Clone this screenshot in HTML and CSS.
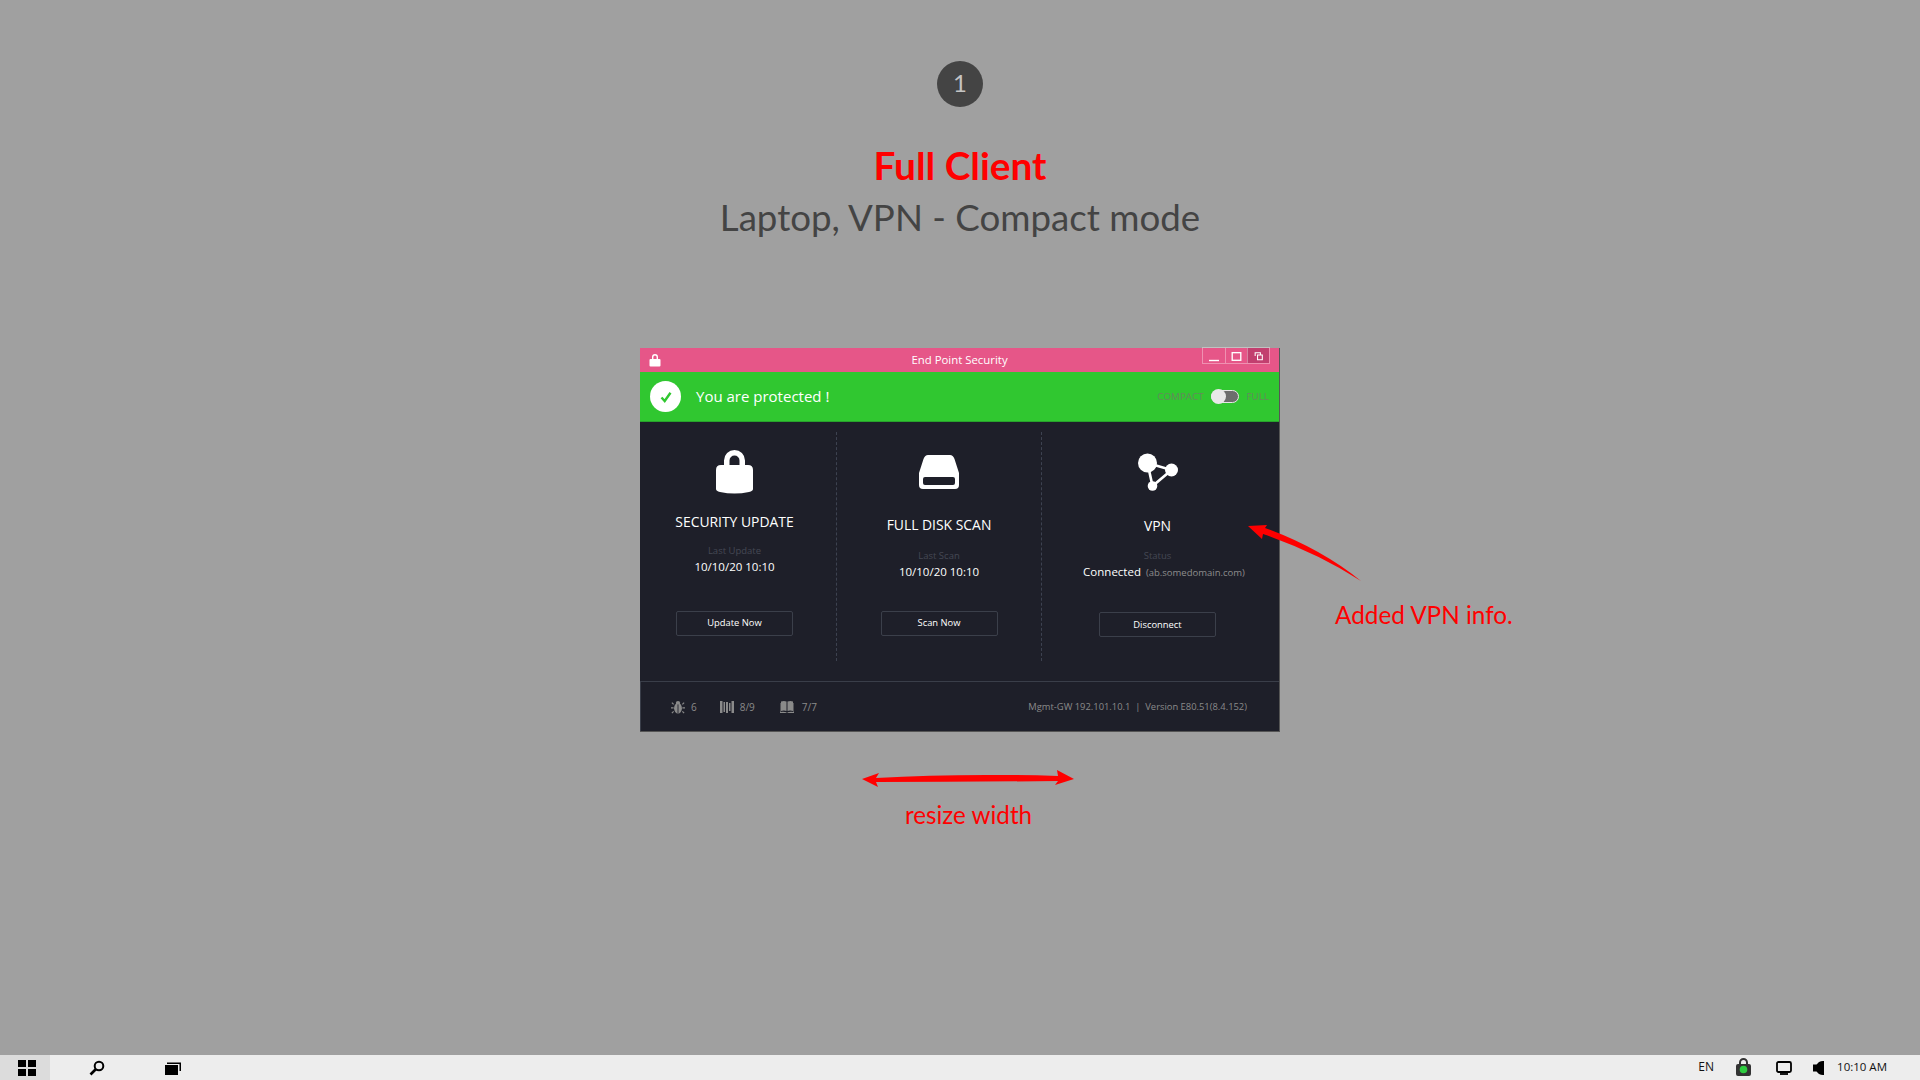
FILE: index.html
```html
<!DOCTYPE html>
<html lang="en">
<head>
    <meta charset="UTF-8">
    <title>End Point Security - Full Client</title>
    <link rel="stylesheet" href="styles.css">
</head>
<body>
    <main class="stage">
        <div class="step-badge">1</div>
        <h1 class="page-title">Full Client</h1>
        <h2 class="page-subtitle">Laptop, VPN - Compact mode</h2>

        <section class="app-window">
            <header class="title-bar">
                <svg class="title-lock" viewBox="0 0 12 14"><path fill="#fff" fill-rule="evenodd" d="M3 6V4a3 3 0 0 1 6 0v2h1.500q1 0 1 1v5.500q0 1-1 1h-9q-1 0-1-1V7q0-1 1-1zM4.400 6h3.200V4a1.600 1.600 0 0 0-3.200 0z"/></svg>
                <span class="title-text">End Point Security</span>
                <div class="window-controls">
                    <span class="win-btn"><svg viewBox="0 0 22 16"><path d="M6 12.500h10" stroke="#fff" stroke-width="1.400"/></svg></span>
                    <span class="win-btn"><svg viewBox="0 0 22 16"><rect x="6.500" y="4.500" width="9" height="8" fill="none" stroke="#fff" stroke-width="1.400"/></svg></span>
                    <span class="win-btn active"><svg viewBox="0 0 22 16"><path d="M7.500 8V4.500H13V7M10 7h5v5h-5z" fill="none" stroke="#fff" stroke-width="1.100"/></svg></span>
                </div>
            </header>

            <div class="status-bar">
                <span class="status-check"><svg viewBox="0 0 14 14"><path d="M2.500 7.500 5.700 11 11.500 2.800" fill="none" stroke="#30c730" stroke-width="2.400"/></svg></span>
                <span class="status-text">You are protected !</span>
                <div class="mode-switch">
                    <span>COMPACT</span>
                    <span class="toggle"><span class="toggle-knob"></span></span>
                    <span>FULL</span>
                </div>
            </div>

            <div class="panels">
                <div class="panel panel-update">
                    <svg class="panel-icon icon-lock" viewBox="0 0 37 44"><path fill="#fff" fill-rule="evenodd" d="M8 15V10.500a10.500 10.500 0 0 1 21 0V15h3q5 0 5 5v19q0 2-4 3-14.500 3-29 0-4-1-4-3V20q0-5 5-5zM13.500 15h10V10.500a5 5 0 0 0-10 0z"/></svg>
                    <div class="panel-title">SECURITY UPDATE</div>
                    <div class="panel-label">Last Update</div>
                    <div class="panel-value">10/10/20 10:10</div>
                    <button class="panel-btn">Update Now</button>
                </div>
                <div class="panel panel-scan">
                    <svg class="panel-icon icon-disk" viewBox="0 0 40 34"><path fill="#fff" fill-rule="evenodd" d="M9 0h22q3 0 4.500 4L40 18v12q0 4-4 4H4q-4 0-4-4V18L4.500 4Q6 0 9 0zM6 22q-2 0-2 2v4q0 2 2 2h28q2 0 2-2v-4q0-2-2-2z"/></svg>
                    <div class="panel-title">FULL DISK SCAN</div>
                    <div class="panel-label">Last Scan</div>
                    <div class="panel-value">10/10/20 10:10</div>
                    <button class="panel-btn">Scan Now</button>
                </div>
                <div class="panel panel-vpn">
                    <svg class="panel-icon icon-vpn" viewBox="0 0 42 40"><g fill="#fff"><circle cx="10.500" cy="10" r="9.500"/><circle cx="34.500" cy="17" r="6.500"/><circle cx="15.500" cy="33" r="4.800"/></g><path d="M10.500 10 34.500 17 15.500 33z" fill="none" stroke="#fff" stroke-width="2.600"/></svg>
                    <div class="panel-title">VPN</div>
                    <div class="panel-label">Status</div>
                    <div class="panel-value">Connected <small>(ab.somedomain.com)</small></div>
                    <button class="panel-btn">Disconnect</button>
                </div>
            </div>

            <footer class="app-footer">
                <div class="counter">
                    <svg viewBox="0 0 16 16"><g fill="#8a8a8a"><ellipse cx="8" cy="9.500" rx="4.500" ry="6"/><circle cx="8" cy="3.500" r="2.500"/></g><path d="M3 5 1 3M13 5l2-2M3 9H0M13 9h3M3 13l-2 2M13 13l2 2" stroke="#8a8a8a" stroke-width="1.400"/><path d="M8 5v10" stroke="#1e1f29"/></svg>
                    <span>6</span>
                </div>
                <div class="counter counter-bars">
                    <svg viewBox="0 0 14 14"><path fill="#8a8a8a" d="M0 1h2.500v12H0zM3.500 2 5 2v10H3.500zM6 2h2v11H6zM9 3h1.500v8H9zM11.500 1H14v12h-2.500z"/></svg>
                    <span>8/9</span>
                </div>
                <div class="counter counter-book">
                    <svg viewBox="0 0 14 14"><path fill="#8a8a8a" d="M1 1.500q3-1 5.500 0V11Q4 10 1 11zM7.500 1.500q3-1 5.500 0V11q-3-1-5.500 0zM0 3h.5v9q3-.8 6 .3v.7H0zM14 3h-.5v9q-3-.8-6 .3v.7H14z"/></svg>
                    <span>7/7</span>
                </div>
                <div class="footer-info">Mgmt-GW 192.101.10.1 &nbsp;|&nbsp; Version E80.51(8.4.152)</div>
            </footer>
        </section>

        <!-- annotations on top of the mockup -->
        <svg class="notes-layer" viewBox="0 0 1920 1080">
            <g fill="#ff0000">
                <path d="M1248 526 1267 525 1265 528Q1320 548 1361 581 1318 553 1263 534L1262 539z"/>
                <path d="M862 779 879 773 876 778Q960 773 1058 776L1057 770 1074 779 1055 785 1058 781Q960 782 876 782L878 787z"/>
            </g>
        </svg>
        <div class="note note-vpn">Added VPN info.</div>
        <div class="note note-resize">resize width</div>
    </main>

    <div class="taskbar">
        <div class="start-btn">
            <svg viewBox="0 0 18 16"><path fill="#000" d="M0 0h8v7H0zM10 0h8v7h-8zM0 9h8v7H0zM10 9h8v7h-8z"/></svg>
        </div>
        <svg class="task-icon task-search" viewBox="0 0 16 16"><circle cx="10" cy="6" r="4.300" fill="none" stroke="#000" stroke-width="2"/><path d="M7 9 1.500 14.500" stroke="#000" stroke-width="2.600"/></svg>
        <svg class="task-icon task-view" viewBox="0 0 16 14"><path fill="#000" d="M0 4h13v10H0zM2 1.500h14V10h-1.500V3H2z"/></svg>
        <div class="tray">
            <span class="tray-lang">EN</span>
            <svg class="tray-lock" viewBox="0 0 15 18"><path fill="#333" fill-rule="evenodd" d="M3 6V4.500a4.500 4.500 0 0 1 9 0V6h1q2 0 2 2v8q0 2-2 2H2q-2 0-2-2V8q0-2 2-2zM5 6h5V4.500a2.500 2.500 0 0 0-5 0z"/><circle cx="7.500" cy="11.500" r="3.800" fill="#2ecc40"/></svg>
            <svg class="tray-monitor" viewBox="0 0 16 14"><rect x="1" y="1" width="14" height="10" rx="1.500" fill="none" stroke="#000" stroke-width="1.800"/><path d="M4 13h8" stroke="#000" stroke-width="1.800"/></svg>
            <svg class="tray-speaker" viewBox="0 0 11 14"><path fill="#000" d="M0 3.500h3.500L6 1Q8 0 10 0h1v14h-1Q8 14 6 13L3.500 10.500H0z"/></svg>
            <span class="tray-clock">10:10 AM</span>
        </div>
    </div>
</body>
</html>
```

FILE: styles.css
```css
* {
    box-sizing: border-box;
}
body {
    margin: 0;
    height: 1080px;
    overflow: hidden;
    display: flex;
    flex-direction: column;
    background-color: #a0a0a0;
    font-family: "Open Sans", "Noto Sans", sans-serif;
}
.stage {
    position: relative;
    flex: 1;
    padding-top: 61px;
    display: flex;
    flex-direction: column;
    align-items: center;
}

/* page heading */
.step-badge {
    width: 46px;
    height: 46px;
    border-radius: 50%;
    background-color: #444;
    color: #c4c4c4;
    font-family: Lato, sans-serif;
    font-size: 24px;
    line-height: 43px;
    text-align: center;
}
.page-title,
.page-subtitle {
    margin: 0;
    height: 50px;
    line-height: 50px;
    font-family: Lato, sans-serif;
    white-space: nowrap;
}
.page-title {
    margin-top: 33px;
    color: #ff0000;
    font-size: 38.800px;
    font-weight: bold;
}
.page-subtitle {
    margin-top: 2px;
    color: #444;
    font-size: 36.700px;
    font-weight: normal;
}

/* app window */
.app-window {
    width: 640px;
    height: 384px;
    margin-top: 106px;
    display: flex;
    flex-direction: column;
    background-color: #1e1f29;
    border-right: 1px solid #555;
    border-bottom: 1px solid #555;
}
.title-bar {
    height: 24px;
    flex: none;
    display: grid;
    grid-template-columns: 1fr auto 1fr;
    align-items: center;
    background-color: #e65688;
    color: #fff;
    padding: 0 9px;
}
.title-lock {
    width: 12px;
    height: 14px;
}
.title-text {
    padding-bottom: 1px;
    font-size: 11.400px;
}
.window-controls {
    justify-self: end;
    align-self: start;
    display: flex;
    height: 17px;
    margin-top: -1px;
    border: 1px solid rgba(255, 255, 255, 0.35);
}
.win-btn {
    width: 22px;
    height: 15px;
    border-left: 1px solid rgba(255, 255, 255, 0.35);
    display: flex;
}
.win-btn:first-child {
    border-left: 0;
}
.win-btn.active {
    background-color: #c23f6f;
}
.win-btn svg {
    width: 22px;
    height: 16px;
}
.status-bar {
    height: 50px;
    flex: none;
    display: flex;
    align-items: center;
    padding: 0 10px;
    background-color: #30c730;
    border-bottom: 1px solid #28a32c;
}
.status-check {
    width: 31px;
    height: 31px;
    border-radius: 50%;
    background-color: #fff;
    display: flex;
    align-items: center;
    justify-content: center;
}
.status-check svg {
    width: 14px;
    height: 14px;
}
.status-text {
    margin-left: 15px;
    padding-bottom: 2px;
    color: #fff;
    font-size: 15px;
}
.mode-switch {
    margin-left: auto;
    display: flex;
    align-items: center;
    color: #648a5c;
    font-size: 9.800px;
}
.toggle {
    position: relative;
    width: 28px;
    height: 13px;
    margin: 0 8px 0 7px;
    border: 1px solid #e6e6e6;
    border-radius: 7px;
    background-color: #6d6d6d;
}
.toggle-knob {
    position: absolute;
    left: -1px;
    top: -2px;
    width: 15px;
    height: 15px;
    border-radius: 50%;
    background-color: #e8e8e8;
}

/* three info columns */
.panels {
    flex: 1;
    display: grid;
    grid-template-columns: 196px 205px 1fr;
    padding-top: 10px;
    padding-bottom: 20px;
}
.panel {
    display: flex;
    flex-direction: column;
    align-items: center;
    color: #fff;
    border-left: 1px dashed #3d4250;
}
.panel-update {
    border-left: 0;
    padding-right: 7px;
}
.panel-vpn {
    padding-right: 6px;
}
.panel-icon {
    display: block;
}
.panel-title {
    font-size: 13.900px;
    line-height: 18px;
}
.panel-label {
    font-size: 9.500px;
    line-height: 14px;
    color: #454854;
}
.panel-value {
    margin-top: 1px;
    font-size: 11.500px;
    line-height: 16px;
    white-space: nowrap;
}
.panel-value small {
    margin-left: 2px;
    font-size: 9.500px;
    color: #8d8d8d;
}
.panel-btn {
    width: 117px;
    height: 25px;
    background: transparent;
    border: 1px solid #3b3f4a;
    border-radius: 2px;
    color: #fff;
    font-family: inherit;
    font-size: 9.400px;
    padding: 0 0 2px;
}
.icon-lock {
    width: 37px;
    height: 44px;
    margin-top: 18px;
}
.panel-update .panel-title {
    margin-top: 19px;
}
.panel-update .panel-label {
    margin-top: 13px;
}
.panel-update .panel-btn {
    margin-top: 36px;
}
.icon-disk {
    width: 40px;
    height: 34px;
    margin-top: 23px;
}
.panel-scan .panel-title {
    margin-top: 27px;
}
.panel-scan .panel-label {
    margin-top: 15px;
}
.panel-scan .panel-btn {
    margin-top: 31px;
}
.icon-vpn {
    width: 42px;
    height: 40px;
    margin-top: 21px;
}
.panel-vpn .panel-title {
    margin-top: 24px;
}
.panel-vpn .panel-label {
    margin-top: 14px;
}
.panel-vpn .panel-value {
    margin-left: 13px;
}
.panel-vpn .panel-btn {
    margin-top: 31px;
    padding: 0 0 1px;
}

/* footer strip */
.app-footer {
    height: 50px;
    flex: none;
    display: flex;
    align-items: center;
    padding: 0 32px 0 30px;
    border-top: 1px solid #3a3e49;
    border-left: 1px solid #3a3e49;
    color: #8a8a8a;
    font-size: 10px;
}
.counter {
    display: flex;
    align-items: center;
    gap: 6px;
    margin-right: 23px;
}
.counter-bars {
    margin-right: 25px;
}
.counter-book {
    gap: 8px;
}
.counter svg {
    width: 14px;
    height: 14px;
}
.footer-info {
    margin-left: auto;
    font-size: 9.400px;
    white-space: nowrap;
}

/* annotations */
.notes-layer {
    position: absolute;
    left: 0;
    top: 0;
    width: 1920px;
    height: 1080px;
    pointer-events: none;
}
.note {
    position: absolute;
    color: #ff0000;
    font-family: Lato, sans-serif;
    white-space: nowrap;
}
.note-vpn {
    left: 1335px;
    top: 599px;
    font-size: 24.300px;
    line-height: 32px;
}
.note-resize {
    left: 905px;
    top: 800px;
    font-size: 24.200px;
    line-height: 30px;
}

/* windows taskbar */
.taskbar {
    height: 25px;
    flex: none;
    display: flex;
    align-items: center;
    background-color: #ededed;
    color: #111;
    font-size: 12px;
}
.start-btn {
    width: 50px;
    height: 25px;
    padding-left: 3px;
    display: flex;
    align-items: center;
    justify-content: center;
    background-color: #dcdcdc;
}
.start-btn svg {
    width: 18px;
    height: 16px;
}
.task-icon {
    width: 16px;
    height: 16px;
}
.task-search {
    margin-left: 39px;
}
.task-view {
    margin-left: 60px;
    height: 14px;
}
.tray {
    margin-left: auto;
    display: flex;
    align-items: center;
    padding-right: 33px;
}
.tray-lang,
.tray-clock {
    padding-bottom: 2px;
}
.tray-lock {
    width: 15px;
    height: 18px;
    margin: 0 0 2px 22px;
}
.tray-monitor {
    width: 16px;
    height: 14px;
    margin-left: 25px;
}
.tray-speaker {
    width: 11px;
    height: 14px;
    margin-left: 21px;
}
.tray-clock {
    margin-left: 13px;
    font-size: 11.500px;
}
```
